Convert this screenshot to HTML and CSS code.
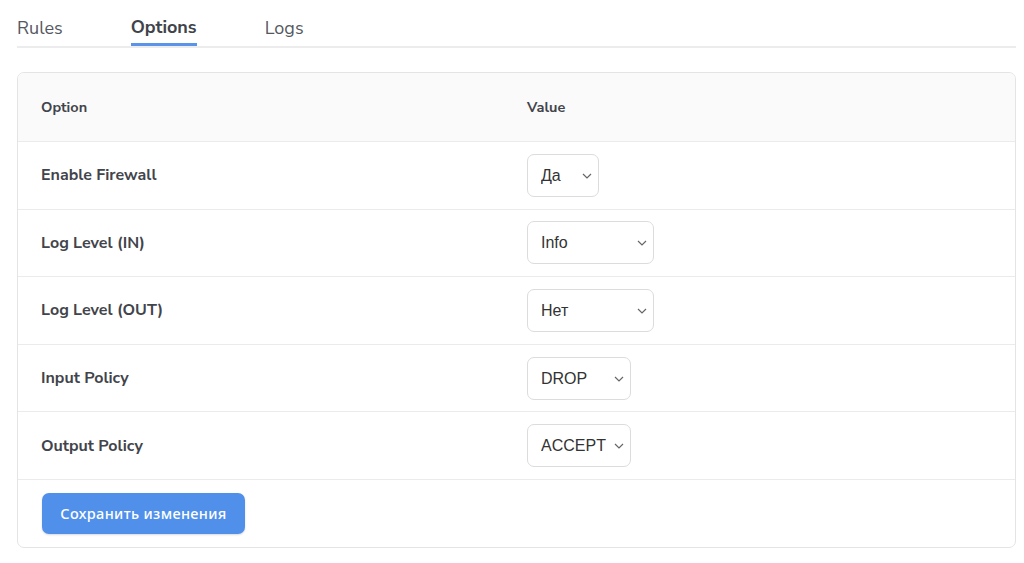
FILE: index.html
```html
<!DOCTYPE html>
<html lang="en">
<head>
  <meta charset="UTF-8">
  <title>Firewall Options</title>
  <link rel="stylesheet" href="styles.css">
</head>
<body>

<div class="tabs">
  <a class="tab">Rules</a>
  <a class="tab active">Options</a>
  <a class="tab">Logs</a>
</div>

<div class="card">
  <div class="row head">
    <div class="cell">Option</div>
    <div class="cell">Value</div>
  </div>

  <div class="row">
    <div class="cell name">Enable Firewall</div>
    <div class="cell">
      <label class="sel w-yes">
        <select><option>Да</option><option>Нет</option></select>
        <svg class="chev" width="10" height="6" viewBox="0 0 10 6"><path d="M1 1l4 4 4-4" fill="none" stroke="#666" stroke-width="1.2"/></svg>
      </label>
    </div>
  </div>

  <div class="row">
    <div class="cell name">Log Level (IN)</div>
    <div class="cell">
      <label class="sel w-lvl">
        <select><option>Info</option><option>Нет</option></select>
        <svg class="chev" width="10" height="6" viewBox="0 0 10 6"><path d="M1 1l4 4 4-4" fill="none" stroke="#666" stroke-width="1.2"/></svg>
      </label>
    </div>
  </div>

  <div class="row">
    <div class="cell name">Log Level (OUT)</div>
    <div class="cell">
      <label class="sel w-lvl">
        <select><option>Нет</option><option>Info</option></select>
        <svg class="chev" width="10" height="6" viewBox="0 0 10 6"><path d="M1 1l4 4 4-4" fill="none" stroke="#666" stroke-width="1.2"/></svg>
      </label>
    </div>
  </div>

  <div class="row">
    <div class="cell name">Input Policy</div>
    <div class="cell">
      <label class="sel w-pol">
        <select><option>DROP</option><option>ACCEPT</option></select>
        <svg class="chev" width="10" height="6" viewBox="0 0 10 6"><path d="M1 1l4 4 4-4" fill="none" stroke="#666" stroke-width="1.2"/></svg>
      </label>
    </div>
  </div>

  <div class="row">
    <div class="cell name">Output Policy</div>
    <div class="cell">
      <label class="sel w-pol">
        <select><option>ACCEPT</option><option>DROP</option></select>
        <svg class="chev" width="10" height="6" viewBox="0 0 10 6"><path d="M1 1l4 4 4-4" fill="none" stroke="#666" stroke-width="1.2"/></svg>
      </label>
    </div>
  </div>

  <div class="foot">
    <button class="save">Сохранить изменения</button>
  </div>
</div>

</body>
</html>
```

FILE: styles.css
```css
body {
  margin: 0;
  padding: 0 8px 0 17px;
  font-family: "Nunito Sans", Lato, "Noto Sans", sans-serif;
  color: #3f4148;
  background: #fff;
}

.tabs {
  display: flex;
  gap: 68px;
  width: 999px;
  height: 46px;
  border-bottom: 2px solid #ececec;
}
.tab {
  font-size: 18px;
  line-height: 20px;
  padding-top: 18px;
  color: #555860;
  cursor: pointer;
}
.tab.active {
  font-weight: 700;
  color: #40434a;
  border-bottom: 3px solid #5a93ea;
  height: 26px;
  margin-bottom: -3px;
  padding-top: 17px;
}

.card {
  width: 997px;
  margin-top: 24px;
  border: 1px solid #e4e4e4;
  border-radius: 7px;
  overflow: hidden;
}
.row {
  display: grid;
  grid-template-columns: 486px 1fr;
  height: 66.6px;
  align-items: center;
  border-bottom: 1px solid #ebebeb;
}
.row.head {
  height: 68px;
  background: #fafafa;
}
.cell {
  padding-left: 23px;
  font-size: 16px;
  font-weight: 700;
  color: #42444b;
}
.head .cell {
  font-size: 14.5px;
}

.sel {
  position: relative;
  display: inline-block;
  vertical-align: middle;
}
.sel select {
  appearance: none;
  -webkit-appearance: none;
  height: 43px;
  border: 1px solid #dcdcdc;
  border-radius: 7px;
  background: #fff;
  padding: 0 0 0 13px;
  font-family: "Liberation Sans", Arial, sans-serif;
  font-size: 16px;
  color: #333;
  outline: none;
}
.w-yes select { width: 72px; }
.w-lvl select { width: 127px; }
.w-pol select { width: 104px; }
.chev {
  position: absolute;
  right: 7px;
  top: 19px;
  pointer-events: none;
}

.foot {
  height: 67px;
  display: flex;
  align-items: center;
  padding-left: 24px;
}
.save {
  height: 41px;
  width: 203px;
  border: none;
  border-radius: 7px;
  background: #5090ea;
  color: #fff;
  font-family: "Noto Sans", Lato, sans-serif;
  font-size: 14.5px;
  font-weight: 500;
  letter-spacing: 0.35px;
  box-shadow: 0 1px 2px rgba(0,0,0,0.15);
}
```
